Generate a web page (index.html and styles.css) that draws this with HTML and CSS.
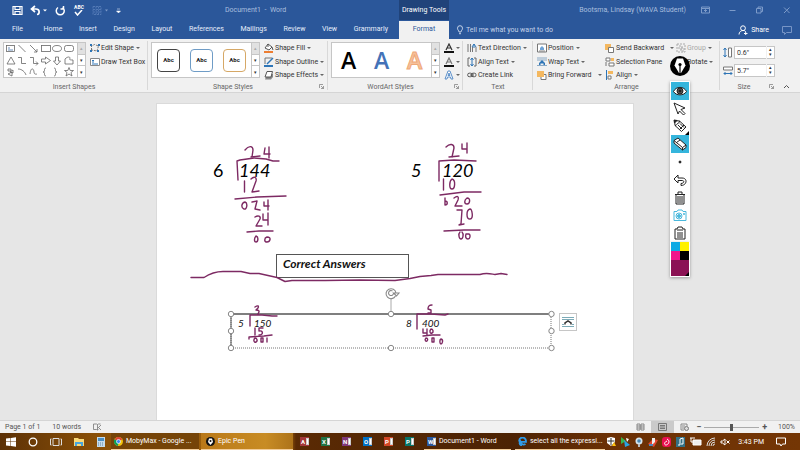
FILE: index.html
```
<!DOCTYPE html>
<html lang="en">
<head>
  <meta charset="UTF-8">
  <meta name="viewport" content="width=device-width, initial-scale=1.0">
  <title>Document1 - Word</title>
  <link rel="stylesheet" href="styles.css">
</head>
<body>
  <header class="titlebar">
    <div class="quick-access">
      <button aria-label="Save"><svg width="11" height="11" viewBox="0 0 11 11"><path d="M1 1.5h9v8H1z M3 1.5v3h5v-3 M3 9.500v-3h5v3" fill="none" stroke="#fff" stroke-width="1.2"/></svg></button>
      <button aria-label="Undo"><svg width="18" height="11" viewBox="0 0 18 11"><path d="M5 1L1.500 4 5 7M2 4h4c4 0 4 5 1 5.500" fill="none" stroke="#fff" stroke-width="1.700"/><path d="M13 4.500h4l-2 2z" fill="#fff"/></svg></button>
      <button aria-label="Redo"><svg width="11" height="11" viewBox="0 0 11 11"><path d="M3 2.500a4 4 0 1 0 4.500 0M8.500 1v3H5.500" fill="none" stroke="#fff" stroke-width="1.500"/></svg></button>
      <button class="spelling" aria-label="Spelling">ABC<svg width="10" height="6" viewBox="0 0 10 6"><path d="M2 2l2.500 3L9 0" fill="none" stroke="#fff" stroke-width="1.500"/></svg></button>
      <button aria-label="Table"><svg width="17" height="11" viewBox="0 0 17 11"><path d="M1 1.500h8v8H1zM1 4.500h8M1 7h8M4 1.500v8M6.500 1.500v8" fill="none" stroke="#5279b5" stroke-dasharray="2 1"/><path d="M13 4.500h3l-1.500 2z" fill="#7d9bc9"/></svg></button>
      <button aria-label="Customize toolbar"><svg width="5" height="11" viewBox="0 0 5 11"><path d="M1 4h3M.5 6h4l-2 2z" fill="#fff" stroke="#fff" stroke-width=".5"/></svg></button>
    </div>
    <div class="doc-title">Document1 &nbsp;-&nbsp; Word</div>
    <div class="context-title">Drawing Tools</div>
    <div class="user-name">Bootsma, Lindsay (WAVA Student)</div>
    <div class="window-buttons">
      <button aria-label="Ribbon options"><svg width="9" height="8" viewBox="0 0 9 8"><path d="M.5 1h8v6h-8zM.5 2.500h8M4.500 6V3.500M3 5l1.500-1.500L6 5"/></svg></button>
      <button aria-label="Minimize"><svg width="9" height="8" viewBox="0 0 9 8"><path d="M1.500 4.500h6"/></svg></button>
      <button aria-label="Restore"><svg width="9" height="8" viewBox="0 0 9 8"><path d="M1.500 2.500h4.500v4.500H1.500zM3 2.500V1h4.500v4.500H6"/></svg></button>
      <button aria-label="Close"><svg width="9" height="8" viewBox="0 0 9 8"><path d="M2 1.500l5.500 5.500M7.500 1.500L2 7"/></svg></button>
    </div>
  </header>

  <nav class="tabs">
    <div class="tab-list">
      <a href="#" class="file-tab">File</a>
      <a href="#">Home</a>
      <a href="#">Insert</a>
      <a href="#">Design</a>
      <a href="#">Layout</a>
      <a href="#">References</a>
      <a href="#">Mailings</a>
      <a href="#">Review</a>
      <a href="#">View</a>
      <a href="#">Grammarly</a>
    </div>
    <a href="#" class="active">Format</a>
    <button class="tell-me"><svg width="8" height="10" viewBox="0 0 8 10"><path d="M3 7C3 5.500 1.500 5 1.500 3.200a2.500 2.500 0 0 1 5 0C6.500 5 5 5.500 5 7zM3 8.700h2" fill="none" stroke="#d5e0f1" stroke-width=".9"/></svg>Tell me what you want to do</button>
    <button class="share"><svg width="10" height="10" viewBox="0 0 10 10"><circle cx="5" cy="3.200" r="2.400"/><path d="M1 9.500c0-2.500 2-4 4-4s2 .5 3 1.500M6 8.500h3.500M7.700 7v3"/></svg>Share</button>
    <button class="comments" aria-label="Comments"><svg width="10" height="9" viewBox="0 0 10 9"><path d="M.5.5h9v6H4.500L2.500 8.500v-2h-2z" fill="none" stroke="#7795c6"/></svg></button>
  </nav>

  <section class="ribbon">
    <div class="group insert-shapes">
      <div class="group-body">
        <div class="gallery">
          <svg class="shapes" width="73" height="34" viewBox="0 0 73 34">
            <rect x="2.500" y="2.500" width="8" height="6"/><path d="M4 5h2M4 7h5" stroke="#4472a8"/>
            <path d="M14.500 2l7 7M26 2l7 7M33 6v3h-3"/><rect x="37.500" y="2.500" width="9" height="6"/><ellipse cx="53" cy="5.500" rx="4.500" ry="3"/><rect x="60.500" y="2.500" width="9" height="6" rx="2"/>
            <path d="M7 14l-4 7h8zM14 14.500h3.500v6H22M26 14.500h3.500v6H34M32 18.500l2 2-2 2M37.500 16h4v-2l5 3.500-5 3.500v-2h-4zM51.500 14v4h-2l3.500 4 3.500-4h-2v-4zM61 16c3-3 5-2 5-1s-2 2 3 2v4h-8z"/>
            <path d="M4 26h3v2H4zM6 29l3-2v3zM4 31l4-2v4zM14 26c4 0 7 3 8 6M26 31c1-8 4-5 4-2s3 2 3 2M42 25c-3 0 0 4-3 4 3 0 0 4 3 4M50 25c3 0 0 4 3 4-3 0 0 4-3 4M65 24.500l1.200 3h3.300l-2.500 2 1 3.500-3-2-3 2 1-3.500-2.500-2h3.300z"/>
          </svg>
          <div class="gallery-scroll"><button class="off" aria-label="Up">▴</button><button aria-label="Down">▾</button><button aria-label="More">▾</button></div>
        </div>
        <div class="commands">
          <button><svg width="10" height="10" viewBox="0 0 10 10"><path d="M1.500 7V3l3-1.500L8.500 3 7 8z" fill="none" stroke="#777" stroke-dasharray="2 1"/><path d="M0 1h2v2H0zM8 1h2v2H8zM0 7h2v2H0zM7 7h2v2H7z" fill="#2e75b6"/></svg>Edit Shape<i></i></button>
          <button><svg width="10" height="10" viewBox="0 0 10 10"><path d="M.5 1.500h9v7h-9z" fill="#fff" stroke="#888"/><path d="M2 3.500h2M2 5h2M2 7h6" stroke="#2e75b6"/></svg>Draw Text Box</button>
        </div>
      </div>
      <div class="group-label">Insert Shapes</div>
    </div>

    <div class="group with-launcher shape-styles">
      <div class="group-body">
        <div class="gallery">
          <div class="presets">
            <button class="preset">Abc</button>
            <button class="preset blue">Abc</button>
            <button class="preset gold">Abc</button>
          </div>
          <div class="gallery-scroll"><button class="off" aria-label="Up">▴</button><button aria-label="Down">▾</button><button aria-label="More">▾</button></div>
        </div>
        <div class="commands">
          <button><svg width="10" height="10" viewBox="0 0 10 10"><path d="M4 1l4 3-3 3-4-2zM4 1v3M8 4l1 3" fill="#fff" stroke="#555"/><path d="M0 8h9v2H0z" fill="#ed7d31"/></svg>Shape Fill<i></i></button>
          <button><svg width="10" height="10" viewBox="0 0 10 10"><path d="M1 1h7M1 1v6" stroke="#777"/><path d="M9 1L4 6 3 7" stroke="#2e75b6" stroke-width="1.500"/><path d="M0 8h9v2H0z" fill="#2e75b6"/></svg>Shape Outline<i></i></button>
          <button><svg width="10" height="10" viewBox="0 0 10 10"><path d="M3 4h6v3L7 9.500H1z" fill="#888"/><path d="M3 1.500h5.500L7 7H1z" fill="#fff" stroke="#555"/></svg>Shape Effects<i></i></button>
        </div>
      </div>
      <div class="group-label">Shape Styles</div>
      <svg class="launcher" width="5" height="5" viewBox="0 0 5 5"><path d="M.5 4V.5H4M2 2l2.500 2.500M4.500 2v2.500H2"/></svg>
    </div>

    <div class="group with-launcher wordart">
      <div class="group-body">
        <div class="gallery">
          <div class="presets letters">
            <button>A</button><button class="blue">A</button><button class="peach">A</button>
          </div>
          <div class="gallery-scroll"><button class="off" aria-label="Up">▴</button><button aria-label="Down">▾</button><button aria-label="More">▾</button></div>
        </div>
        <div class="commands">
          <button aria-label="Text Fill"><svg width="10" height="10" viewBox="0 0 10 10"><path d="M2 7l3-6 3 6M3 5h4" fill="none" stroke="#333" stroke-width="1.200"/><path d="M0 8h10v2H0z" fill="#111"/></svg><i></i></button>
          <button aria-label="Text Outline"><svg width="10" height="10" viewBox="0 0 10 10"><path d="M2 7l3-6 3 6M3 5h4" fill="none" stroke="#777" stroke-width="1.200"/><path d="M0 8h10v2H0z" fill="#111"/></svg><i></i></button>
          <button aria-label="Text Effects"><svg width="10" height="10" viewBox="0 0 10 10"><path d="M1 9l3-8h2l3 8H7L6.500 7h-3L3 9zM4 5.500h2L5 3z" fill="#fff" stroke="#5b8fc9"/></svg><i></i></button>
        </div>
      </div>
      <div class="group-label">WordArt Styles</div>
      <svg class="launcher" width="5" height="5" viewBox="0 0 5 5"><path d="M.5 4V.5H4M2 2l2.500 2.500M4.500 2v2.500H2"/></svg>
    </div>

    <div class="group text-group">
      <div class="group-body">
        <div class="commands">
          <button><svg width="10" height="10" viewBox="0 0 10 10"><path d="M1 1v8M3.500 1v8M5.500 4v5M9 4v5" stroke="#777"/><path d="M5 4l2-3 2 3M7 1v4" fill="none" stroke="#2e75b6"/></svg>Text Direction<i></i></button>
          <button><svg width="10" height="10" viewBox="0 0 10 10"><path d="M3 1H1v8h2M7 1h2v8H7" fill="none" stroke="#666"/><path d="M5 1v8M3.500 3L5 1l1.500 2M3.500 7L5 9l1.500-2" fill="none" stroke="#2e75b6"/></svg>Align Text<i></i></button>
          <button><svg width="10" height="10" viewBox="0 0 10 10"><rect x=".7" y="3.200" width="4.500" height="3.500" rx="1.500" fill="none" stroke="#555"/><rect x="4.500" y="3.200" width="4.500" height="3.500" rx="1.500" fill="none" stroke="#555"/><path d="M3 5h4" stroke="#555"/></svg>Create Link</button>
        </div>
      </div>
      <div class="group-label">Text</div>
    </div>

    <div class="group arrange">
      <div class="group-body">
        <div class="commands">
          <button><svg width="10" height="10" viewBox="0 0 10 10"><path d="M.5 1h9v8h-9z" fill="#fff" stroke="#777"/><path d="M3 7V5l2-2 2 2v2z" fill="#6fa3d6"/><path d="M2 8h6" stroke="#888"/></svg>Position<i></i></button>
          <button><svg width="10" height="10" viewBox="0 0 10 10"><path d="M0 1h10M0 3h10M0 8.500h10" stroke="#8aa9c4"/><path d="M2 8V6l3-3 3 3v2H6.500V6.500h-3V8z" fill="#2e75b6"/></svg>Wrap Text<i></i></button>
          <button><svg width="10" height="10" viewBox="0 0 10 10"><path d="M4 4.500h5v5H4z" fill="#fff" stroke="#777"/><path d="M0 1h7v6H0z" fill="#f4b860"/></svg>Bring Forward<i class="split"></i></button>
        </div>
        <div class="commands">
          <button><svg width="10" height="10" viewBox="0 0 10 10"><path d="M0 1h6v6H0z" fill="#f4b860"/><path d="M3.500 4.500h5v5h-5z" fill="#fff" stroke="#777"/></svg>Send Backward<i class="split"></i></button>
          <button><svg width="10" height="10" viewBox="0 0 10 10"><path d="M1 1h4v3H1zM4 6h5v3H4zM1 5v4" fill="#fff" stroke="#777"/><path d="M6 1h3v3H6z" fill="#f4b860"/></svg>Selection Pane</button>
          <button><svg width="10" height="10" viewBox="0 0 10 10"><path d="M1.500 0v10" stroke="#2e75b6"/><path d="M3 1h5v3H3z" fill="#f4b860"/><path d="M3 6h3v3H3z" fill="#fff" stroke="#777"/></svg>Align<i></i></button>
        </div>
        <div class="commands">
          <button class="disabled" disabled><svg width="10" height="10" viewBox="0 0 10 10"><path d="M1 1h8v8H1zM3 3h3v3H3zM5 5h3v3H5z" fill="none" stroke="#aaa" stroke-dasharray="2 1"/></svg>Group<i></i></button>
          <button><svg width="10" height="10" viewBox="0 0 10 10"><path d="M1 9l4-7v7z" fill="#bbb"/></svg>Rotate<i></i></button>
        </div>
      </div>
      <div class="group-label">Arrange</div>
    </div>

    <div class="group with-launcher size">
      <div class="group-body size-fields">
        <label><svg width="10" height="11" viewBox="0 0 10 11"><path d="M2 1v9M.5 3L2 1l1.500 2M.5 8L2 10l1.500-2" fill="none" stroke="#2e75b6"/><path d="M5.500 1h3v9h-3z" fill="#fff" stroke="#777"/></svg><input type="text" value='0.6"' aria-label="Shape height"><span>▴<br>▾</span></label>
        <label><svg width="10" height="11" viewBox="0 0 10 11"><path d="M.5 2h9v3h-9z" fill="#fff" stroke="#777"/><path d="M1 8.500h8M2.500 7L1 8.500 2.500 10M7.500 7L9 8.500 7.500 10" fill="none" stroke="#2e75b6"/></svg><input type="text" value='5.7"' aria-label="Shape width"><span>▴<br>▾</span></label>
      </div>
      <div class="group-label">Size</div>
      <svg class="launcher" width="5" height="5" viewBox="0 0 5 5"><path d="M.5 4V.5H4M2 2l2.500 2.500M4.500 2v2.500H2"/></svg>
    </div>
    <button class="collapse" aria-label="Collapse ribbon"><svg width="7" height="5" viewBox="0 0 7 5"><path d="M1 4l2.500-2.500L6 4" fill="none" stroke="#555"/></svg></button>
  </section>

  <main class="workspace">
    <article class="page">
      <div class="number big first-divisor">6</div>
      <div class="number big italic first-dividend">144</div>
      <div class="number big italic second-divisor">5</div>
      <div class="number big italic second-dividend">120</div>
      <div class="answers-box">Correct Answers</div>
      <div class="number italic third-divisor">5</div>
      <div class="number italic third-dividend">150</div>
      <div class="number italic fourth-divisor">8</div>
      <div class="number italic fourth-dividend">400</div>

      <svg class="drawing" width="478" height="317" viewBox="156 103 478 317">
        <!-- selected text box -->
        <path d="M231 314h320" stroke="#555" stroke-width="1.500"/>
        <path d="M231 314v34h320v-34" stroke="#777" stroke-dasharray="1 1" fill="none"/>
        <path d="M231 315v32" stroke="#555"/>
        <path d="M391 299v12" stroke="#aaa"/>
        <g class="handles">
          <circle cx="231" cy="314" r="2.700"/><circle cx="391" cy="314" r="2.700"/><circle cx="551.500" cy="314" r="2.700"/>
          <circle cx="231" cy="331" r="2.700"/><circle cx="551.500" cy="331" r="2.700"/>
          <circle cx="231" cy="348" r="2.700"/><circle cx="391" cy="348" r="2.700"/><circle cx="551.500" cy="348" r="2.700"/>
        </g>
        <path d="M395.500 296a5 5 0 1 1 .5-3M393.500 293.500a2.500 2.500 0 1 1-1-2.500M393.500 293h5.500l-2.500 3z" fill="none" stroke="#888" stroke-width="1.100"/>

        <!-- pen strokes -->
        <g class="ink">
          <path d="M245 150c4-5 8-4 8 0l-1 7M251 157l9-1M265 148l-1 6h6M269 147v11"/>
          <path d="M238 180l-1-19 3-1 14-2 12 1 7 2h6"/>
          <path d="M244.500 181v11M251 179c3-3 6-2 5 2l-4 11 7-1"/>
          <path d="M235 199l22-2 29-1"/>
          <path d="M245 202c-4 1-4 6-1 7s4-6 1-7zM252 202l5-1-2 8 5 1M264 202v4h5M268 200v10"/>
          <path d="M255 217c3-2 6-1 5 2l-4 7h6M263 214v6h5M268 213v12"/>
          <path d="M247 232l12-1h14"/>
          <path d="M256 236c-2 2-2 6 0 6s3-5 0-6zM267 237c-3 1-3 5 0 5s5-5 0-5z"/>

          <path d="M446 147c4-4 8-3 8 1l-2 9M449 157l10-1M462 144v5h4M467 143v10"/>
          <path d="M439 181v-20l15-1 22 1"/>
          <path d="M443.500 179v11M452 179c-3 2-3 10 0 10s4-9 0-10z"/>
          <path d="M440 195l24-3h17"/>
          <path d="M445 198v7c3 0 3-4 0-4M454 198c4-3 5-1 4 2l-3 6h7M467 198c-3 2-3 6 0 6s4-6 0-6z"/>
          <path d="M457 210h5l-1 14-2 1 5-1M470 209c-4 1-4 10 0 10s2-10 0-10z"/>
          <path d="M444 231l20-1h16"/>
          <path d="M460 232c-2 2-1 7 1 7s3-5 1-7M466 234c-1 3 0 5 2 5s3-4 1-5h-3"/>

          <path d="M191 277.500h13c6-4 11-6 19-6h18l9 2h9l18 4 8 4 7-1h33l35-.5 35 .5 15-2 10-2 11-1 7-1h42c6-2 9-1 15 0l6-1 6 1"/>

          <path d="M255 307c3-2 4-1 3 1l-2 2c3 0 4 1 2 4M250 326v-11h12l10 1h5"/>
          <path d="M255 328v7M263 328h-4v3c4-1 5 4 0 4"/>
          <path d="M249 339v-2l15-1 8-1M255 338c-2 2-1 5 1 4s1-4-1-4zM261 338v4h2v-4zM267 338v4"/>

          <path d="M432 305c-4 0-4 2-4 4l3 1v3h-3M417 329v-15h14l14 1 3-1"/>
          <path d="M423 329v4h4M427 329v6M431 329c-2 2-1 5 1 4s1-4-1-4z"/>
          <path d="M423 336l9-1h8M426 338c-2 2 0 4 1 3s1-3-1-3zM432 338v4h2v-4zM441 339c-2 1-1 5 0 5s3-4 0-5z"/>
        </g>
      </svg>
      <button class="layout-options" aria-label="Layout options"><svg width="12" height="12" viewBox="0 0 12 12"><path d="M0 1.500h12M0 3.500h12M0 8.500h2M10 8.500h2M0 10.500h12" stroke="#7cabb8"/><path d="M3 8.500V7l3-2 3 2v1.500" fill="none" stroke="#333" stroke-width="1.500"/></svg></button>
    </article>
  </main>

  <footer class="statusbar">
    <span>Page 1 of 1</span>
    <span>10 words</span>
    <svg width="9" height="8" viewBox="0 0 9 8"><path d="M.5 1h3l1 .5 1-.5h2M4.500 1.500V7l-1-.5h-3V1M4.500 7l1-.5M5 5l3-3M6 5l2 2" fill="none" stroke="#777" stroke-width=".8"/></svg>
    <div class="view-controls">
      <button aria-label="Read mode"><svg width="9" height="8" viewBox="0 0 9 8"><path d="M1 1h3v6H1zM5 1h3v6H5zM1 3h7M1 5h7" fill="none" stroke="#888"/></svg></button>
      <button class="selected" aria-label="Print layout"><svg width="9" height="8" viewBox="0 0 9 8"><path d="M.5.500h8v7h-8zM2 2.500h5M2 4h5M2 5.500h5" fill="none" stroke="#777"/></svg></button>
      <button aria-label="Web layout"><svg width="9" height="8" viewBox="0 0 9 8"><path d="M4 7H1V1h6v2M2 3h3M2 5h2" fill="none" stroke="#888"/><circle cx="6.500" cy="5.500" r="2" fill="#ddd" stroke="#777"/></svg></button>
    </div>
    <div class="zoom-controls">
      <button aria-label="Zoom out">−</button>
      <input type="range" min="10" max="190" value="100" aria-label="Zoom">
      <button aria-label="Zoom in">+</button>
    </div>
    <span class="percent">100%</span>
  </footer>

  <nav class="taskbar">
    <div class="launchers">
      <button aria-label="Start"><svg width="10" height="10" viewBox="0 0 10 10"><path d="M0 1.500L4.500 1v3.500H0zM5 1l5-.7v4.200H5zM0 5h4.500v4L0 8.500zM5 5h5v4.700L5 9z" fill="#fff"/></svg></button>
      <button aria-label="Cortana"><svg width="10" height="10" viewBox="0 0 10 10"><circle cx="5" cy="5" r="3.800" fill="none" stroke="#fff" stroke-width="1.300"/></svg></button>
      <button aria-label="Task view"><svg width="12" height="10" viewBox="0 0 12 10"><path d="M3 1.500h6v7H3zM1.500 2H.5v6h1M10.500 2h1v6h-1" fill="none" stroke="#ddd"/></svg></button>
      <button aria-label="File Explorer"><svg width="10" height="10" viewBox="0 0 10 10"><path d="M0 1h4l1 1h5v7H0z" fill="#f9d978"/><path d="M1 9V5h8v4H7V7H3v2z" fill="#48a5dc"/></svg></button>
      <button aria-label="Calculator"><svg width="10" height="10" viewBox="0 0 10 10"><path d="M1 0h8v10H1z" fill="#c5dcec"/><path d="M2 1h6v3H2z" fill="#4a8fc4"/><path d="M2 6h6M2 8h6" stroke="#6286a0" stroke-dasharray="1 1"/></svg></button>
    </div>
    <button class="task chrome"><svg width="9" height="9" viewBox="0 0 9 9"><circle cx="4.500" cy="4.500" r="4.500" fill="#f4c20d"/><path d="M4.500 4.500L.6 2.200a4.500 4.500 0 0 1 7.800 0z" fill="#db4437"/><path d="M4.500 4.500L.6 2.200A4.500 4.500 0 0 0 4 9z" fill="#0f9d58"/><circle cx="4.500" cy="4.500" r="2" fill="#4285f4" stroke="#fff" stroke-width=".7"/></svg>MobyMax - Google ...</button>
    <button class="task epic"><svg width="9" height="9" viewBox="0 0 9 9"><circle cx="4.500" cy="4.500" r="4.500" fill="#111"/><path d="M3 1.500h3L7 5 4.500 8 2 5z" fill="#fff"/><circle cx="4.500" cy="4" r="1" fill="#111"/></svg>Epic Pen</button>
    <div class="office">
      <button class="app access" aria-label="Access">A<span></span></button>
      <button class="app excel" aria-label="Excel">X<span></span></button>
      <button class="app onenote" aria-label="OneNote">N<span></span></button>
      <button class="app outlook" aria-label="Outlook">O<span></span></button>
      <button class="app powerpoint" aria-label="PowerPoint">P<span></span></button>
      <button class="app publisher" aria-label="Publisher">P<span></span></button>
    </div>
    <button class="task word"><b class="app">W<span></span></b>Document1 - Word</button>
    <button class="task edge"><svg width="9" height="9" viewBox="0 0 9 9"><path d="M1 4.500C1.500-1 8-.5 8 4.800H3C3 8 6 8 7.500 7M3 3.500C1 5 1 8 4 8.500" fill="none" stroke="#2f9be8" stroke-width="1.800"/></svg>select all the expressi...</button>
    <div class="tray">
      <svg width="10" height="10" viewBox="0 0 10 10"><path d="M1 1l4-1 4 1v4L5 9 1 6z" fill="#fff"/><path d="M5 1v7M1.500 4h7" stroke="#333"/><path d="M8 5l2 4H6z" fill="#ffc20e"/></svg>
      <svg width="10" height="10" viewBox="0 0 10 10"><path d="M1 0l5 4-5 3z" fill="#39b54a"/><path d="M4 3l6 5-5 2z" fill="#2aa3df"/><path d="M6 1l3 1-2 3z" fill="#fff"/></svg>
      <svg width="10" height="10" viewBox="0 0 10 10"><circle cx="5" cy="4" r="3.500" fill="#d5e4ed"/><circle cx="5" cy="4" r="1.800" fill="#4c88b2"/><path d="M4 7h2v3H4z" fill="#bbb"/></svg>
      <svg width="10" height="10" viewBox="0 0 10 10"><path d="M0 7l5-5 5 1-4 7z" fill="#e24731"/><path d="M4 1h3v4l-3 3z" fill="#eee"/><path d="M1 7h4v2H1z" fill="#4f85b8"/></svg>
      <svg width="10" height="10" viewBox="0 0 10 10"><rect width="9" height="10" rx="3" fill="#e9104f"/><path d="M5 2c4 2 1 6-1 6s-2-3 1-4" fill="none" stroke="#fff"/></svg>
      <svg width="10" height="10" viewBox="0 0 10 10"><path d="M0 0h9v10H0z" fill="#347084"/><path d="M4 8V2l3-1v6M2 8h2M5 7h2" stroke="#fff" fill="none"/></svg>
      <svg width="12" height="10" viewBox="0 0 12 10"><path d="M3 3h8v5H3z" fill="#eee" stroke="#fff"/><path d="M0 1h5M1 1v4h3" stroke="#fff" fill="none"/></svg>
      <svg width="10" height="10" viewBox="0 0 10 10"><path d="M1 9A8 8 0 0 1 9 1M3 9a6 6 0 0 1 6-6M5 9a4 4 0 0 1 4-4M7 9a2 2 0 0 1 2-2" fill="none" stroke="#ddd"/></svg>
      <svg width="10" height="10" viewBox="0 0 10 10"><path d="M1 4h1.500L5 2v6L2.500 6H1zM6.500 3.500l3 3M9.500 3.500l-3 3" fill="none" stroke="#fff"/></svg>
    </div>
    <time class="clock">3:43 PM</time>
    <button class="notifications" aria-label="Notifications"><svg width="10" height="10" viewBox="0 0 10 10"><path d="M.5 1h9v6H6.500L5 9 4 7H.5z" fill="none" stroke="#fff"/></svg></button>
  </nav>

  <aside class="pen-palette">
    <svg class="pen-logo" width="20" height="20" viewBox="0 0 20 20"><circle cx="10" cy="10" r="10" fill="#000"/><path d="M7 2.500h6l2.500 7L11 17h-2L4.500 9.500z" fill="#fff"/><path d="M10 9v8" stroke="#000" stroke-width="1.200"/><circle cx="10" cy="8.500" r="1.600"/></svg>
    <div class="pen-tools">
      <button class="on" aria-label="Show ink"><svg width="16" height="16" viewBox="0 0 16 16"><path d="M1.500 8.500C4 3 12 3 14.500 8.500 12 13 4 13 1.500 8.500z" fill="#fff"/><circle cx="8" cy="8" r="3" fill="#555"/><circle cx="8" cy="8" r="1" fill="#111"/></svg></button>
      <button aria-label="Cursor"><svg width="16" height="16" viewBox="0 0 16 16"><path d="M2 2l11 5-4 1.500 4 4-1.500 1.500-4-4L6 13z"/></svg></button>
      <button class="more" aria-label="Pen"><svg width="16" height="16" viewBox="0 0 16 16"><path d="M2.500 2.500l5 .5 6.500 6-4.500 4.500L3 7.500zM3 7.500c2 0 1.500-1.500 2.500-2s2-.5 2-2.500M7.500 11.500l4.500-4.500M6 7l4 4M8 5.500l4 4"/><path d="M2 2l3 .5L2.500 5z" fill="#222"/></svg></button>
      <button class="on" aria-label="Eraser"><svg width="16" height="16" viewBox="0 0 16 16"><path d="M2 4.500L6 2l8 7v2.500L10.500 14 2 7z" fill="#fff"/><path d="M2 4.500l8.500 7L14 9M10.500 11.500V14M4.500 6.500L8 4"/></svg></button>
      <button aria-label="Size"><svg width="16" height="16" viewBox="0 0 16 16"><circle cx="8" cy="8" r="1" fill="#111"/></svg></button>
      <button aria-label="Undo ink"><svg width="16" height="16" viewBox="0 0 16 16"><path d="M6 3L2 7l4 4V8.500h4c3 0 2 3-1 3v2c6 0 7-7.500 1-7.500H6z"/></svg></button>
      <button aria-label="Clear"><svg width="16" height="16" viewBox="0 0 16 16"><path d="M3 4.500h10M6 4V2h4v2M4 5v9h8V5M6 6v7M8 6v7M10 6v7"/></svg></button>
      <button class="camera" aria-label="Screenshot"><svg width="16" height="16" viewBox="0 0 16 16"><path d="M2 4.500h3l1-1.500h4l1 1.500h3v9H2zM11 7h2M12 6v2"/><circle cx="7" cy="9" r="3"/><circle cx="7" cy="9" r="1.500" fill="#49b8dc"/></svg></button>
      <button aria-label="Clipboard"><svg width="16" height="16" viewBox="0 0 16 16"><path d="M3 4h2l1-2h4l1 2h2v10H3zM5 5h6M5 8h6M5 10h6M5 12h6"/></svg></button>
    </div>
    <div class="swatches">
      <button class="cyan" aria-label="Cyan"></button><button class="yellow" aria-label="Yellow"></button>
      <button class="pink" aria-label="Pink"></button><button class="black" aria-label="Black"></button>
      <button class="current more" aria-label="Current colour"></button>
    </div>
  </aside>
</body>
</html>
```
FILE: styles.css
```
* {
  box-sizing: border-box;
}

body {
  margin: 0;
  min-height: 100vh;
  display: flex;
  flex-direction: column;
  position: relative;
  font-family: "Segoe UI", Roboto, sans-serif;
  font-size: 7px;
  line-height: 10px;
  color: #333;
  background: #e6e6e6;
}

button,
input {
  font: inherit;
  color: inherit;
  border: none;
  background: none;
  padding: 0;
  margin: 0;
}

svg {
  flex: none;
  display: block;
}

a {
  color: inherit;
  text-decoration: none;
}

.titlebar {
  display: flex;
  align-items: center;
  height: 20px;
  background: #2b579a;
  color: #a9bfdf;
}

.quick-access {
  display: flex;
  align-items: center;
  gap: 7px;
  width: 225px;
  padding-left: 12px;
}

.spelling {
  width: 12px;
  font-size: 5px;
  font-weight: bold;
  line-height: 5px;
  color: #fff;
}

.doc-title {
  width: 174px;
}

.context-title {
  width: 50px;
  line-height: 20px;
  text-align: center;
  background: #20437a;
  color: #fff;
}

.user-name {
  margin-left: auto;
}

.window-buttons {
  display: flex;
  gap: 18px;
  padding: 0 9px 0 15px;
}

.window-buttons svg {
  fill: none;
  stroke: #7d9bc9;
}

.tabs {
  display: flex;
  align-items: stretch;
  height: 19px;
  padding-top: 1px;
  line-height: 17px;
  background: #2b579a;
  color: #e6eefa;
}

.tab-list {
  display: flex;
  justify-content: space-between;
  width: 399px;
  padding: 0 11px 0 12px;
}

.file-tab {
  margin-right: 4px;
}

.tabs .active {
  width: 50px;
  text-align: center;
  background: #f1f1f1;
  color: #2b579a;
}

.tabs button {
  display: flex;
  align-items: center;
  gap: 2px;
}

.tell-me {
  margin-left: 7px;
  color: #c3d2e9;
}

.tabs .share {
  margin-left: auto;
  gap: 3px;
  color: #fff;
}

.share svg {
  fill: none;
  stroke: #fff;
}

.comments {
  margin: 0 8px 0 13px;
}

.ribbon {
  display: flex;
  height: 54px;
  background: #f1f1f1;
  border-bottom: 1px solid #d5d5d5;
}

.group {
  position: relative;
  display: flex;
  flex-direction: column;
  justify-content: space-between;
  padding: 2px 3px 0;
}

.group::after {
  content: "";
  position: absolute;
  right: 0;
  top: 2px;
  bottom: 2px;
  border-right: 1px solid #d8d8d8;
}

.insert-shapes {
  width: 148px;
}

.shape-styles {
  width: 180px;
}

.wordart {
  width: 135px;
}

.text-group {
  width: 70px;
}

.arrange {
  width: 187px;
}

.size {
  width: 58px;
}

.group:last-of-type::after {
  border: none;
}

.group-body {
  display: flex;
  gap: 4px;
}

.group-label {
  text-align: center;
  color: #666;
}

.with-launcher .group-label {
  padding-right: 10px;
}

.launcher {
  position: absolute;
  right: 4px;
  bottom: 3px;
  fill: none;
  stroke: #777;
  stroke-width: 0.7;
}

.gallery {
  display: flex;
  height: 36px;
  margin-top: 1px;
  border: 1px solid #c6c6c6;
  background: #fff;
}

.shapes {
  fill: none;
  stroke: #666;
  stroke-width: 0.8;
}

.gallery-scroll {
  display: flex;
  flex-direction: column;
  width: 8px;
  border-left: 1px solid #c6c6c6;
}

.gallery-scroll button {
  flex: 1;
  font-size: 5px;
  line-height: 8px;
}

.gallery-scroll button + button {
  border-top: 1px solid #c6c6c6;
}

.gallery-scroll .off {
  background: #e1e1e1;
  color: #aaa;
}

.commands {
  display: flex;
  flex-direction: column;
}

.commands button {
  display: flex;
  align-items: center;
  gap: 1px;
  height: 13px;
  white-space: nowrap;
}

.commands button:first-child {
  height: 14px;
}

/* drop-down arrow */
.commands i {
  margin-left: 1px;
  border: 2px solid transparent;
  border-top-color: #666;
  border-bottom: none;
}

.commands .split {
  margin-left: 5px;
}

.commands .disabled {
  color: #a8a8a8;
}

.presets {
  display: flex;
  align-items: center;
  gap: 10px;
  width: 99px;
  padding-left: 5px;
}

.preset {
  width: 23px;
  height: 23px;
  border: 1px solid #444;
  border-radius: 4px;
  font-size: 6px;
  font-weight: bold;
  color: #222;
}

.preset.blue {
  border-color: #6f9cc6;
}

.preset.gold {
  border-color: #d6a866;
}

.letters {
  gap: 0;
  padding: 0;
}

.letters button {
  flex: 1;
  font-family: "Open Sans", sans-serif;
  font-size: 23px;
  font-weight: 600;
  line-height: 34px;
  color: #000;
}

.letters .blue {
  color: #4472b8;
}

.letters .peach {
  color: #f6c19c;
  -webkit-text-stroke: 1px #efa878;
}

.text-group .group-body,
.arrange .group-body {
  padding-left: 1px;
}

.arrange .commands:first-child {
  width: 64px;
}

.arrange .commands:nth-child(2) {
  width: 67px;
}

.size-fields {
  flex-direction: column;
  gap: 5px;
  padding-top: 5px;
}

.size-fields label {
  display: flex;
  align-items: center;
  gap: 1px;
  height: 13px;
}

.size-fields input {
  width: 32px;
  height: 13px;
  padding-left: 2px;
  border: 1px solid #c6c6c6;
  border-right: none;
  background: #fff;
}

.size-fields span {
  width: 10px;
  height: 13px;
  font-size: 5px;
  line-height: 5px;
  text-align: center;
  border: 1px solid #c6c6c6;
  border-left: none;
  background: #fff;
}

.collapse {
  margin: auto 10px 3px auto;
}

.workspace {
  flex: 1;
  display: flex;
  padding: 10px 166px 0 156px;
}

.page {
  position: relative;
  flex: 1;
  min-height: 317px;
  background: #fff;
  border: 1px solid #dadada;
  border-bottom: none;
}

.number {
  position: absolute;
  font-family: "Lucida Sans", Lato, sans-serif;
  font-size: 10px;
  line-height: 12px;
  color: #111;
}

.big {
  font-size: 18px;
  line-height: 20px;
  color: #000;
}

.italic {
  font-style: italic;
}

.first-divisor { left: 56px; top: 56px; }
.first-dividend { left: 82px; top: 56px; }
.second-divisor { left: 254px; top: 56px; }
.second-dividend { left: 285px; top: 56px; }
.third-divisor { left: 81px; top: 213px; }
.third-dividend { left: 97px; top: 213px; }
.fourth-divisor { left: 249px; top: 213px; }
.fourth-dividend { left: 265px; top: 213px; }

.answers-box {
  position: absolute;
  left: 119px;
  top: 150px;
  width: 133px;
  height: 24px;
  padding: 2px 6px;
  border: 1px solid #555;
  font-family: "Lucida Handwriting", Lato, cursive;
  font-size: 12px;
  font-style: italic;
  font-weight: bold;
  line-height: 14px;
  color: #111;
}

/* covers the page border too */
.drawing {
  position: absolute;
  left: -1px;
  top: -1px;
}

.handles {
  fill: #fff;
  stroke: #888;
}

.ink {
  fill: none;
  stroke: #7d2a63;
  stroke-width: 1.4;
  stroke-linecap: round;
  stroke-linejoin: round;
}

.layout-options {
  position: absolute;
  left: 402px;
  top: 209px;
  padding: 2px;
  border: 1px solid #c6c6c6;
  background: #fff;
}

.statusbar {
  display: flex;
  align-items: center;
  gap: 12px;
  height: 13px;
  padding: 0 5px;
  background: #f1f1f1;
  border-top: 1px solid #d5d5d5;
  color: #555;
}

.view-controls {
  display: flex;
  align-items: center;
  margin-left: auto;
}

.view-controls button {
  padding: 2px 6px;
}

.view-controls .selected {
  padding: 2px 7px;
  background: #cacaca;
}

.zoom-controls {
  display: flex;
  align-items: center;
  gap: 3px;
  margin-left: -11px;
}

.zoom-controls button {
  font-size: 9px;
  font-weight: bold;
}

.zoom-controls input {
  appearance: none;
  width: 55px;
  height: 10px;
  background: linear-gradient(#aaa, #aaa) center / 100% 1px no-repeat;
}

.zoom-controls input::-webkit-slider-thumb {
  appearance: none;
  width: 3px;
  height: 7px;
  background: #555;
}

.percent {
  margin-left: -1px;
}

.taskbar {
  display: flex;
  align-items: center;
  height: 17px;
  background: linear-gradient(90deg, #5c3106, #8a5008 12%, #a76a10 36%, #5a2a04 37%, #4c2304 64%, #6b3005 76%, #743605);
  color: #fff;
}

.launchers {
  display: flex;
  gap: 12px;
  width: 111px;
  padding-left: 6px;
}

.task {
  display: flex;
  align-items: center;
  gap: 3px;
  height: 17px;
  padding: 0 3px;
  border-bottom: 1px solid #f3cd9a;
  white-space: nowrap;
}

.chrome {
  width: 88px;
  background: #754408;
}

.epic {
  width: 92px;
  margin-left: 2px;
  padding-left: 5px;
  background: linear-gradient(90deg, #b97818, #c88c24 70%, #ad731a);
}

.office {
  display: flex;
  gap: 12px;
  width: 131px;
  padding-left: 7px;
}

.app {
  display: flex;
  align-items: center;
  width: 9px;
  height: 9px;
  padding-left: 1px;
  font-size: 6px;
  font-weight: bold;
  line-height: 9px;
  background: #2b579a;
  color: #fff;
}

.app span {
  width: 3px;
  height: 7px;
  margin-left: auto;
  border: 1px solid #ccc;
  background: #fff;
}

.access { background: #a4373a; }
.excel { background: #217346; }
.onenote { background: #80397b; }
.outlook { background: #0072c6; }
.powerpoint { background: #d24726; }
.publisher { background: #077568; }

.word {
  width: 87px;
}

.edge {
  width: 90px;
  margin-left: 4px;
}

.tray {
  display: flex;
  gap: 4px;
  margin-left: auto;
}

.clock {
  margin-left: 8px;
}

.notifications {
  margin: 0 14px 0 12px;
}

/* floating Epic Pen palette */
.pen-palette {
  position: absolute;
  right: 110px;
  top: 56px;
  width: 20px;
}

.pen-tools {
  display: flex;
  flex-direction: column;
  height: 161px;
  margin-top: 5px;
}

.pen-tools,
.swatches {
  padding: 1px;
  background: #fff;
  box-shadow: 0 1px 3px #999;
}

.pen-tools {
  padding-bottom: 0;
}

.pen-tools button {
  position: relative;
  flex: 1;
  display: flex;
  align-items: center;
  justify-content: center;
  min-height: 0;
}

.pen-tools svg {
  fill: none;
  stroke: #222;
  stroke-width: 1;
}

.pen-tools .camera svg {
  stroke: #49b8dc;
}

.pen-tools .on {
  background: #35b5dc;
}

.more::after {
  content: "";
  position: absolute;
  right: 0;
  bottom: 0;
  border: 2px solid #000;
  border-top-color: transparent;
  border-left-color: transparent;
}

.swatches {
  display: grid;
  grid-template-columns: 1fr 1fr;
  grid-template-rows: 9px 9px 16px;
  padding-top: 0;
}

.cyan { background: #0da9e4; }
.yellow { background: #fff100; }
.pink { background: #f0148c; }
.black { background: #000; }

.current {
  position: relative;
  grid-column: span 2;
  background: #8b1254;
}
```
